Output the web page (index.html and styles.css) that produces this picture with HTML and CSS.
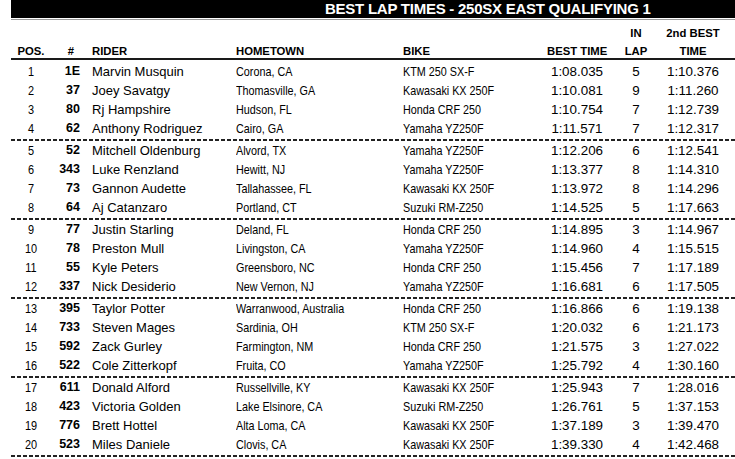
FILE: index.html
```html
<!DOCTYPE html>
<html>
<head>
<meta charset="utf-8">
<link rel="stylesheet" href="styles.css">
</head>
<body>
<div class="sheet">
  <div class="titlebar">BEST LAP TIMES - 250SX EAST QUALIFYING 1</div>
  <div class="gray-rule"></div>
  <div class="row head">
    <div class="c-pos">POS.</div>
    <div class="c-num">#</div>
    <div class="c-rider">RIDER</div>
    <div class="c-home">HOMETOWN</div>
    <div class="c-bike">BIKE</div>
    <div class="c-best">BEST TIME</div>
    <div class="c-lap">IN<br>LAP</div>
    <div class="c-second">2nd BEST<br>TIME</div>
  </div>
  <div class="head-rule"></div>

  <div class="group">
    <div class="row"><div class="c-pos">1</div><div class="c-num">1E</div><div class="c-rider">Marvin Musquin</div><div class="c-home">Corona, CA</div><div class="c-bike">KTM 250 SX-F</div><div class="c-best">1:08.035</div><div class="c-lap">5</div><div class="c-second">1:10.376</div></div>
    <div class="row"><div class="c-pos">2</div><div class="c-num">37</div><div class="c-rider">Joey Savatgy</div><div class="c-home">Thomasville, GA</div><div class="c-bike">Kawasaki KX 250F</div><div class="c-best">1:10.081</div><div class="c-lap">9</div><div class="c-second">1:11.260</div></div>
    <div class="row"><div class="c-pos">3</div><div class="c-num">80</div><div class="c-rider">Rj Hampshire</div><div class="c-home">Hudson, FL</div><div class="c-bike">Honda CRF 250</div><div class="c-best">1:10.754</div><div class="c-lap">7</div><div class="c-second">1:12.739</div></div>
    <div class="row"><div class="c-pos">4</div><div class="c-num">62</div><div class="c-rider">Anthony Rodriguez</div><div class="c-home">Cairo, GA</div><div class="c-bike">Yamaha YZ250F</div><div class="c-best">1:11.571</div><div class="c-lap">7</div><div class="c-second">1:12.317</div></div>
  </div>
  <div class="group">
    <div class="row"><div class="c-pos">5</div><div class="c-num">52</div><div class="c-rider">Mitchell Oldenburg</div><div class="c-home">Alvord, TX</div><div class="c-bike">Yamaha YZ250F</div><div class="c-best">1:12.206</div><div class="c-lap">6</div><div class="c-second">1:12.541</div></div>
    <div class="row"><div class="c-pos">6</div><div class="c-num">343</div><div class="c-rider">Luke Renzland</div><div class="c-home">Hewitt, NJ</div><div class="c-bike">Yamaha YZ250F</div><div class="c-best">1:13.377</div><div class="c-lap">8</div><div class="c-second">1:14.310</div></div>
    <div class="row"><div class="c-pos">7</div><div class="c-num">73</div><div class="c-rider">Gannon Audette</div><div class="c-home">Tallahassee, FL</div><div class="c-bike">Kawasaki KX 250F</div><div class="c-best">1:13.972</div><div class="c-lap">8</div><div class="c-second">1:14.296</div></div>
    <div class="row"><div class="c-pos">8</div><div class="c-num">64</div><div class="c-rider">Aj Catanzaro</div><div class="c-home">Portland, CT</div><div class="c-bike">Suzuki RM-Z250</div><div class="c-best">1:14.525</div><div class="c-lap">5</div><div class="c-second">1:17.663</div></div>
  </div>
  <div class="group">
    <div class="row"><div class="c-pos">9</div><div class="c-num">77</div><div class="c-rider">Justin Starling</div><div class="c-home">Deland, FL</div><div class="c-bike">Honda CRF 250</div><div class="c-best">1:14.895</div><div class="c-lap">3</div><div class="c-second">1:14.967</div></div>
    <div class="row"><div class="c-pos">10</div><div class="c-num">78</div><div class="c-rider">Preston Mull</div><div class="c-home">Livingston, CA</div><div class="c-bike">Yamaha YZ250F</div><div class="c-best">1:14.960</div><div class="c-lap">4</div><div class="c-second">1:15.515</div></div>
    <div class="row"><div class="c-pos">11</div><div class="c-num">55</div><div class="c-rider">Kyle Peters</div><div class="c-home">Greensboro, NC</div><div class="c-bike">Honda CRF 250</div><div class="c-best">1:15.456</div><div class="c-lap">7</div><div class="c-second">1:17.189</div></div>
    <div class="row"><div class="c-pos">12</div><div class="c-num">337</div><div class="c-rider">Nick Desiderio</div><div class="c-home">New Vernon, NJ</div><div class="c-bike">Yamaha YZ250F</div><div class="c-best">1:16.681</div><div class="c-lap">6</div><div class="c-second">1:17.505</div></div>
  </div>
  <div class="group">
    <div class="row"><div class="c-pos">13</div><div class="c-num">395</div><div class="c-rider">Taylor Potter</div><div class="c-home">Warranwood, Australia</div><div class="c-bike">Honda CRF 250</div><div class="c-best">1:16.866</div><div class="c-lap">6</div><div class="c-second">1:19.138</div></div>
    <div class="row"><div class="c-pos">14</div><div class="c-num">733</div><div class="c-rider">Steven Mages</div><div class="c-home">Sardinia, OH</div><div class="c-bike">KTM 250 SX-F</div><div class="c-best">1:20.032</div><div class="c-lap">6</div><div class="c-second">1:21.173</div></div>
    <div class="row"><div class="c-pos">15</div><div class="c-num">592</div><div class="c-rider">Zack Gurley</div><div class="c-home">Farmington, NM</div><div class="c-bike">Honda CRF 250</div><div class="c-best">1:21.575</div><div class="c-lap">3</div><div class="c-second">1:27.022</div></div>
    <div class="row"><div class="c-pos">16</div><div class="c-num">522</div><div class="c-rider">Cole Zitterkopf</div><div class="c-home">Fruita, CO</div><div class="c-bike">Yamaha YZ250F</div><div class="c-best">1:25.792</div><div class="c-lap">4</div><div class="c-second">1:30.160</div></div>
  </div>
  <div class="group">
    <div class="row"><div class="c-pos">17</div><div class="c-num">611</div><div class="c-rider">Donald Alford</div><div class="c-home">Russellville, KY</div><div class="c-bike">Kawasaki KX 250F</div><div class="c-best">1:25.943</div><div class="c-lap">7</div><div class="c-second">1:28.016</div></div>
    <div class="row"><div class="c-pos">18</div><div class="c-num">423</div><div class="c-rider">Victoria Golden</div><div class="c-home">Lake Elsinore, CA</div><div class="c-bike">Suzuki RM-Z250</div><div class="c-best">1:26.761</div><div class="c-lap">5</div><div class="c-second">1:37.153</div></div>
    <div class="row"><div class="c-pos">19</div><div class="c-num">776</div><div class="c-rider">Brett Hottel</div><div class="c-home">Alta Loma, CA</div><div class="c-bike">Kawasaki KX 250F</div><div class="c-best">1:37.189</div><div class="c-lap">3</div><div class="c-second">1:39.470</div></div>
    <div class="row"><div class="c-pos">20</div><div class="c-num">523</div><div class="c-rider">Miles Daniele</div><div class="c-home">Clovis, CA</div><div class="c-bike">Kawasaki KX 250F</div><div class="c-best">1:39.330</div><div class="c-lap">4</div><div class="c-second">1:42.468</div></div>
  </div>
</div>
</body>
</html>
```

FILE: styles.css
```css
html, body {
  margin: 0;
  padding: 0;
  background: #ffffff;
}
body {
  font-family: "Liberation Sans", Arial, sans-serif;
  color: #000;
  width: 735px;
  height: 459px;
  overflow: hidden;
}
.sheet {
  padding-left: 11px;
}
.titlebar {
  height: 18px;
  line-height: 18px;
  background: #000;
  color: #fff;
  font-weight: bold;
  font-size: 15px;
  letter-spacing: -0.25px;
  padding-left: 314px;
  white-space: nowrap;
}
.gray-rule {
  height: 1px;
  margin-top: 1px;
  background: #9a9a9a;
}
.row {
  display: grid;
  grid-template-columns: 40px 29px 156px 167px 144px 60px 58px 56px 1fr;
  height: 19px;
  line-height: 19px;
  font-size: 13px;
  white-space: nowrap;
}
.row.head {
  height: 38px;
  font-size: 11.3px;
  font-weight: bold;
  line-height: 18px;
  align-items: end;
}
.row.head > div {
  margin-bottom: -2px;
}
.head-rule {
  height: 2px;
  background: #1a1a1a;
  margin-bottom: 2px;
}
.c-pos {
  text-align: center;
  transform: scaleX(0.84);
}
.head .c-pos {
  transform: none;
}
.c-num {
  text-align: right;
  font-weight: bold;
  font-size: 12.5px;
}
.head .c-num {
  font-size: 11.3px;
  padding-right: 6px;
}
.c-rider {
  padding-left: 12px;
}
.c-home, .c-bike {
  transform: scaleX(0.83);
  transform-origin: left center;
}
.head .c-home, .head .c-bike {
  transform: none;
}
.c-best, .c-lap, .c-second {
  text-align: center;
  font-size: 13.4px;
}
.head .c-best, .head .c-lap, .head .c-second {
  font-size: 11.3px;
}
.group::after {
  content: "";
  display: block;
  margin-top: 1px;
  height: 2px;
  background: repeating-linear-gradient(to right, #222 0 4px, transparent 4px 6px);
}
```
